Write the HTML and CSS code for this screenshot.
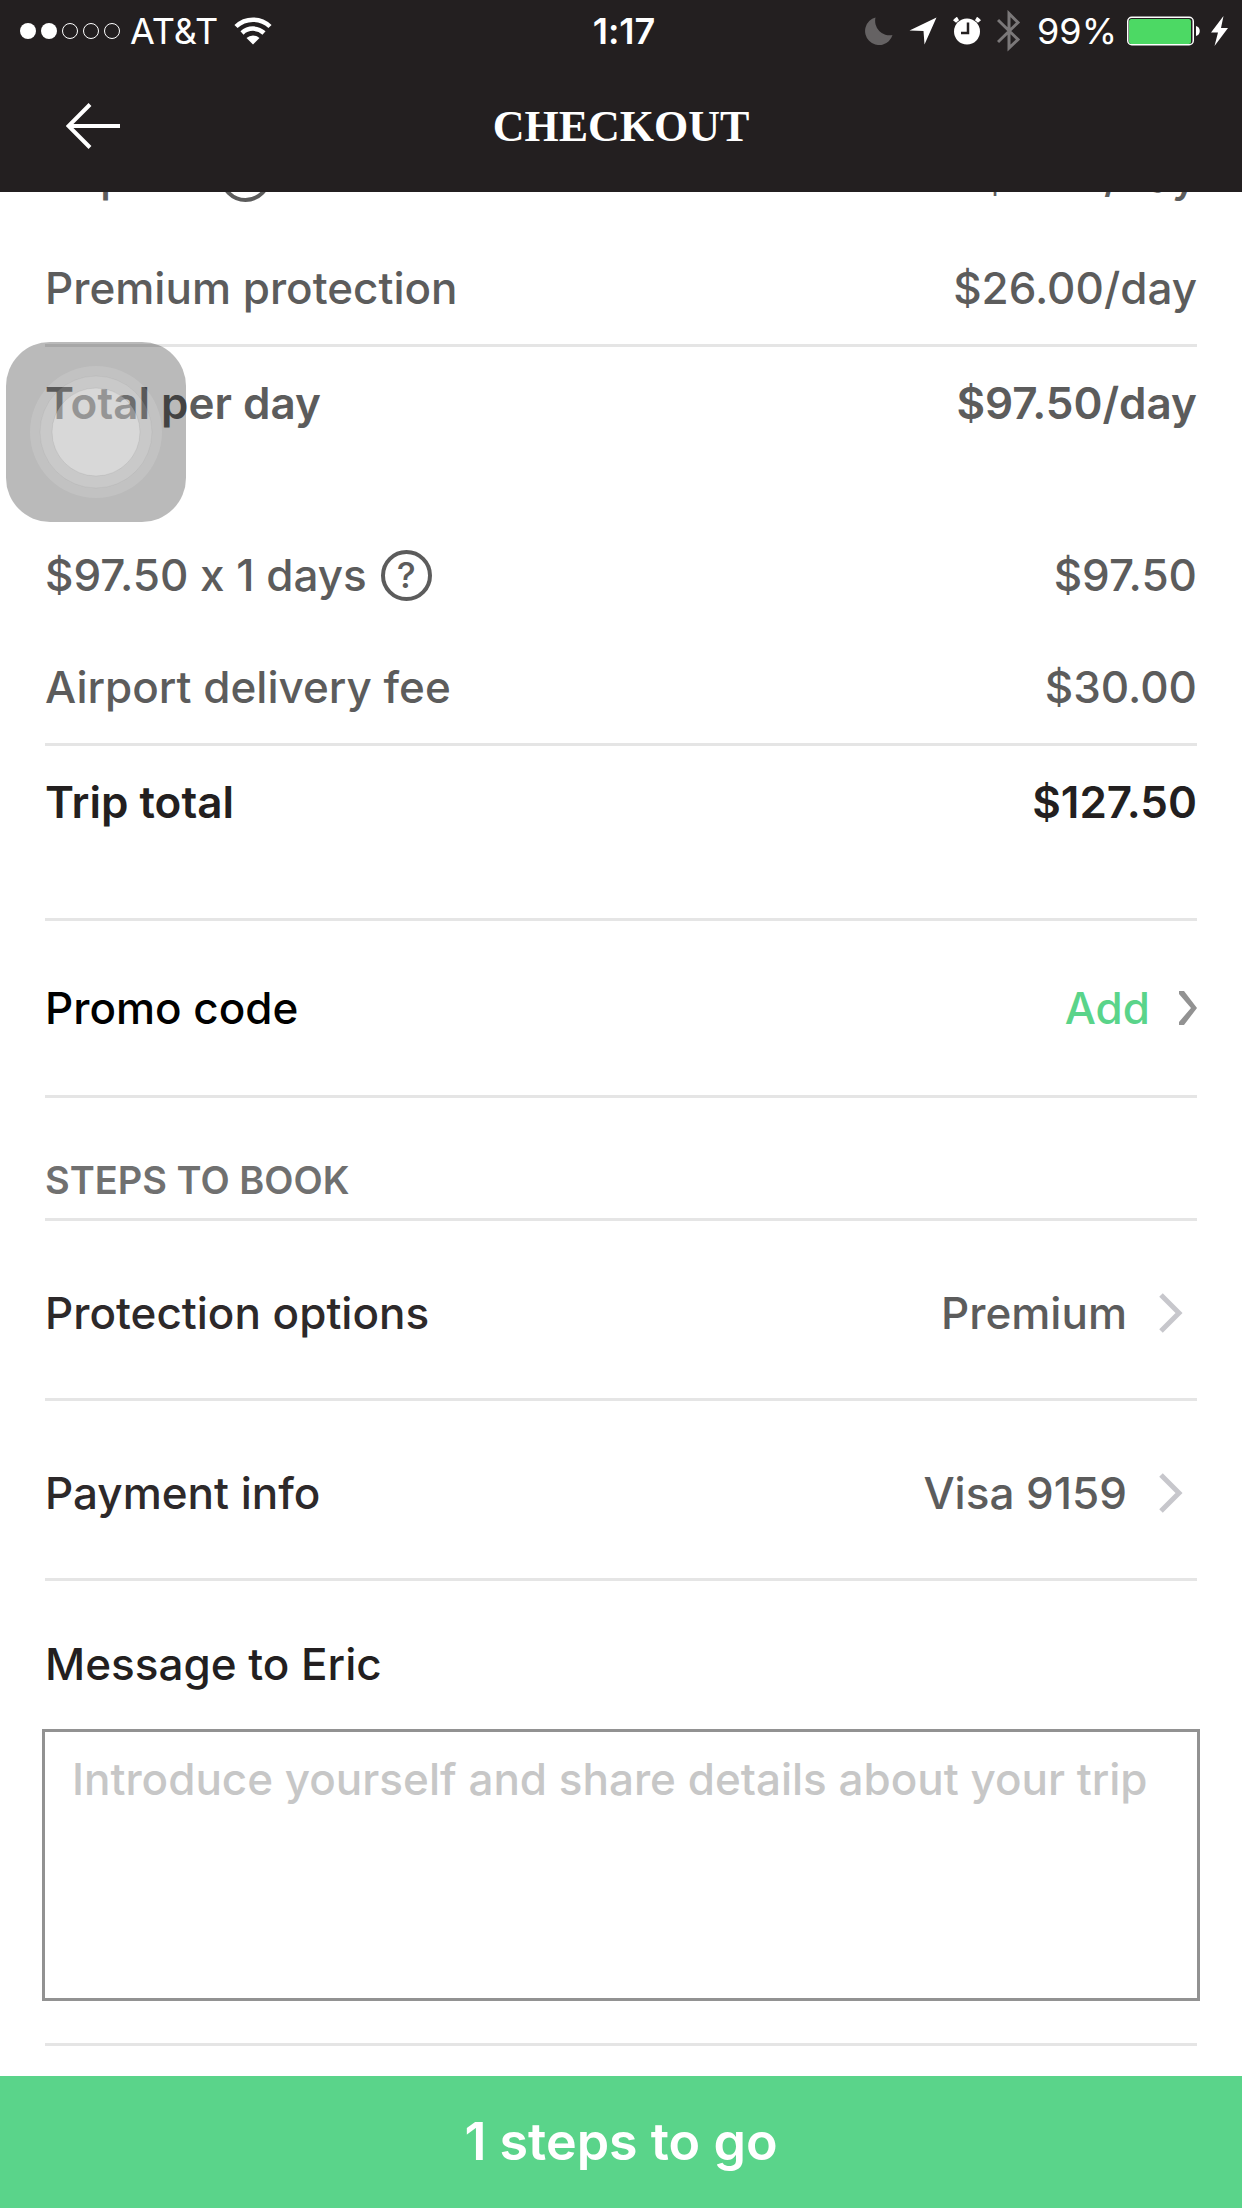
FILE: index.html
```html
<!DOCTYPE html>
<html lang="en">
<head>
  <meta charset="UTF-8">
  <meta name="viewport" content="width=device-width, initial-scale=1.0">
  <title>Checkout</title>
  <link rel="stylesheet" href="styles.css">
</head>
<body>
  <header class="header">
    <div class="status-bar">
      <div class="status-left">
        <svg class="signal" width="100" height="16" viewBox="0 0 100 16">
          <circle cx="8" cy="8" r="8" fill="#fff"/>
          <circle cx="29" cy="8" r="8" fill="#fff"/>
          <circle cx="50" cy="8" r="7.5" fill="none" stroke="#fff"/>
          <circle cx="71" cy="8" r="7.5" fill="none" stroke="#fff"/>
          <circle cx="92" cy="8" r="7.5" fill="none" stroke="#fff"/>
        </svg>
        <span>AT&amp;T</span>
        <svg class="wifi" width="38" height="28" viewBox="0 0 38 28">
          <path d="M2 9.500a24.500 24.500 0 0 1 34 0M8 16a16 16 0 0 1 22 0" fill="none" stroke="#fff" stroke-width="4.500"/>
          <path d="M19 27.500l-6.500-6.500a9.500 9.500 0 0 1 13 0z" fill="#fff"/>
        </svg>
      </div>
      <span class="time">1:17</span>
      <div class="status-right">
        <svg width="28" height="28" viewBox="0 0 28 28">
          <path d="M10.500 0.500A14 14 0 1 0 27.500 18A14.500 14.500 0 0 1 10.500 0.500z" fill="#656263"/>
        </svg>
        <svg width="28" height="28" viewBox="0 0 28 28">
          <path d="M27.500 0.500L0.500 13.500L14.500 14L15.500 27.500z" fill="#fff"/>
        </svg>
        <svg width="28" height="28" viewBox="0 0 28 28">
          <circle cx="14" cy="14.500" r="13" fill="#fff"/>
          <path d="M1.500 4.500A14 14 0 0 1 5 1.500M26.500 4.500A14 14 0 0 0 23 1.500" fill="none" stroke="#fff" stroke-width="4"/>
          <path d="M15 5.500v10.500h-7" fill="none" stroke="#231f20" stroke-width="2.500"/>
        </svg>
        <svg width="24" height="42" viewBox="0 0 24 42">
          <path d="M1 10l20 19.500l-9 8.500V3.500l9 9L1 32" fill="none" stroke="#7b7879" stroke-width="3"/>
        </svg>
        <span class="percent">99%</span>
        <svg width="74" height="30" viewBox="0 0 74 30">
          <rect x="0.750" y="1.250" width="65.500" height="27.500" rx="4" fill="none" stroke="#fff" stroke-width="1.500"/>
          <rect x="2" y="3" width="62" height="25" rx="2.500" fill="#4cd964"/>
          <path d="M69 10c5 1 5 9 0 10z" fill="#fff"/>
        </svg>
        <svg class="bolt" width="17" height="30" viewBox="0 0 17 30">
          <path d="M12.500 0L0 16.500h7L3.500 30L17 12h-7z" fill="#fff"/>
        </svg>
      </div>
    </div>
    <nav class="nav-bar">
      <a class="back" href="#" aria-label="Back">
        <svg width="54" height="46" viewBox="0 0 54 46">
          <path d="M54 23H3M24 1.500L2.500 23L24 44.500" fill="none" stroke="#fff" stroke-width="4"/>
        </svg>
      </a>
      <h1>CHECKOUT</h1>
    </nav>
  </header>

  <main class="content">
    <section class="prices">
      <div class="price-row">
        <span>Trip fee</span>
        <button type="button" class="help" aria-label="About the trip fee">?</button>
        <span class="amount">$6.50/day</span>
      </div>
      <div class="price-row line">
        <span>Premium protection</span>
        <span class="amount">$26.00/day</span>
      </div>
      <div class="price-row bold">
        <span>Total per day</span>
        <span class="amount">$97.50/day</span>
      </div>
    </section>

    <section class="prices">
      <div class="price-row">
        <span>$97.50 x 1 days</span>
        <button type="button" class="help" aria-label="About the number of days">?</button>
        <span class="amount">$97.50</span>
      </div>
      <div class="price-row line">
        <span>Airport delivery fee</span>
        <span class="amount">$30.00</span>
      </div>
      <div class="price-row bold total">
        <span>Trip total</span>
        <span class="amount">$127.50</span>
      </div>
    </section>

    <a class="promo" href="#">
      <span>Promo code</span>
      <span class="add">Add</span>
      <svg width="18" height="34" viewBox="0 0 18 34">
        <path d="M0 0h5L18 17L5 34H0v-3L12 17L0 3z" fill="#929292"/>
      </svg>
    </a>

    <h2>STEPS TO BOOK</h2>
    <a class="step" href="#">
      <span>Protection options</span>
      <span class="value">Premium</span>
      <svg width="24" height="40" viewBox="0 0 24 40">
        <path d="M2 2l18 18L2 38" fill="none" stroke="#c7c7cc" stroke-width="5"/>
      </svg>
    </a>
    <a class="step" href="#">
      <span>Payment info</span>
      <span class="value">Visa 9159</span>
      <svg width="24" height="40" viewBox="0 0 24 40">
        <path d="M2 2l18 18L2 38" fill="none" stroke="#c7c7cc" stroke-width="5"/>
      </svg>
    </a>

    <div class="message">
      <label for="message">Message to Eric</label>
      <textarea id="message" name="message" placeholder="Introduce yourself and share details about your trip"></textarea>
    </div>
  </main>

  <button type="submit" class="submit">1 steps to go</button>

  <!-- floating touch button -->
  <button type="button" class="touch" aria-label="Touch menu">
    <svg width="180" height="180" viewBox="0 0 180 180">
      <circle cx="90" cy="90" r="66" fill="#fff" fill-opacity="0.120"/>
      <circle cx="90" cy="90" r="56" fill="#fff" fill-opacity="0.120" stroke="#000" stroke-opacity="0.040"/>
      <circle cx="90" cy="90" r="44" fill="#fff" fill-opacity="0.280" stroke="#000" stroke-opacity="0.060"/>
    </svg>
  </button>
</body>
</html>
```
FILE: styles.css
```css
* {
  box-sizing: border-box;
}
body {
  display: flex;
  flex-direction: column;
  min-height: 100vh;
  margin: 0;
  font-family: Inter, "Liberation Sans", sans-serif;
  font-size: 44px;
  font-weight: 500;
  font-variant-ligatures: no-contextual;
  color: #5c5c5c;
  background-color: #fff;
}
a {
  color: inherit;
  text-decoration: none;
}
button,
textarea {
  font: inherit;
}
svg {
  display: block;
  flex-shrink: 0;
}

/* header */
.header {
  background-color: #231f20;
  color: #fff;
}
.status-bar {
  display: grid;
  grid-template-columns: 1fr auto 1fr;
  align-items: center;
  height: 62px;
  padding: 0 14px 0 20px;
  font-size: 36px;
  font-weight: 400;
}
.status-left,
.status-right {
  display: flex;
  align-items: center;
}
.status-left {
  gap: 10px;
}
.status-left .wifi {
  margin-left: 6px;
}
.time {
  font-weight: 600;
}
.status-right {
  justify-content: flex-end;
  gap: 16px;
}
.percent {
  margin-right: -6px;
}
.bolt {
  margin-left: -6px;
}
.nav-bar {
  display: grid;
  grid-template-columns: 1fr auto 1fr;
  align-items: center;
  height: 130px;
  padding: 0 66px 2px;
}
h1 {
  margin: 0;
  font-family: "Liberation Serif", serif;
  font-size: 44px;
  font-weight: 700;
}

/* content */
.content {
  flex: 1;
  padding: 0 45px;
  overflow: hidden;
}
.prices {
  padding-bottom: 60px;
}
/* the list is scrolled under the header */
.prices:first-child {
  margin-top: -72px;
}
.price-row {
  display: flex;
  align-items: center;
  gap: 14px;
  line-height: 112px;
}
.line,
.promo,
.step,
.prices + .prices,
h2 {
  border-bottom: 3px solid #e5e5e5;
}
.bold {
  font-weight: 600;
}
.total {
  color: #231f20;
}
.amount,
.add,
.value {
  margin-left: auto;
}
.help {
  width: 51px;
  height: 51px;
  padding: 0;
  border: 4px solid #5c5c5c;
  border-radius: 50%;
  background: none;
  color: #5c5c5c;
  font-size: 36px;
  line-height: 42px;
  text-align: center;
}
.promo {
  display: flex;
  align-items: center;
  line-height: 174px;
  color: #000;
}
.add {
  margin-right: 29px;
  color: #5ad48a;
}
h2 {
  margin: 0;
  padding-top: 44px;
  font-size: 38px;
  font-weight: 600;
  line-height: 76px;
  color: #707070;
}
.step {
  display: flex;
  align-items: center;
  padding: 7px 14px 0 0;
  line-height: 170px;
  color: #2d292a;
}
.value {
  margin-right: 32px;
  color: #5c5c5c;
}
.message {
  padding: 43px 0 42px;
  border-bottom: 3px solid #e5e5e5;
  color: #231f20;
}
.message label {
  display: block;
  margin-bottom: 25px;
  line-height: 80px;
}
.message textarea {
  display: block;
  width: calc(100% + 6px);
  height: 272px;
  margin: 0 -3px;
  padding: 20px 27px;
  border: 3px solid #929292;
  line-height: 54px;
  resize: none;
}
.message textarea::placeholder {
  color: #c7c7c7;
}

.submit {
  margin-top: 30px;
  padding: 0;
  border: none;
  background-color: #5ad48a;
  color: #fff;
  font-size: 52px;
  font-weight: 600;
  line-height: 132px;
  cursor: pointer;
}
.touch {
  position: absolute;
  top: 342px;
  left: 6px;
  padding: 0;
  border: none;
  border-radius: 44px;
  background-color: rgba(0, 0, 0, 0.27);
}
```
